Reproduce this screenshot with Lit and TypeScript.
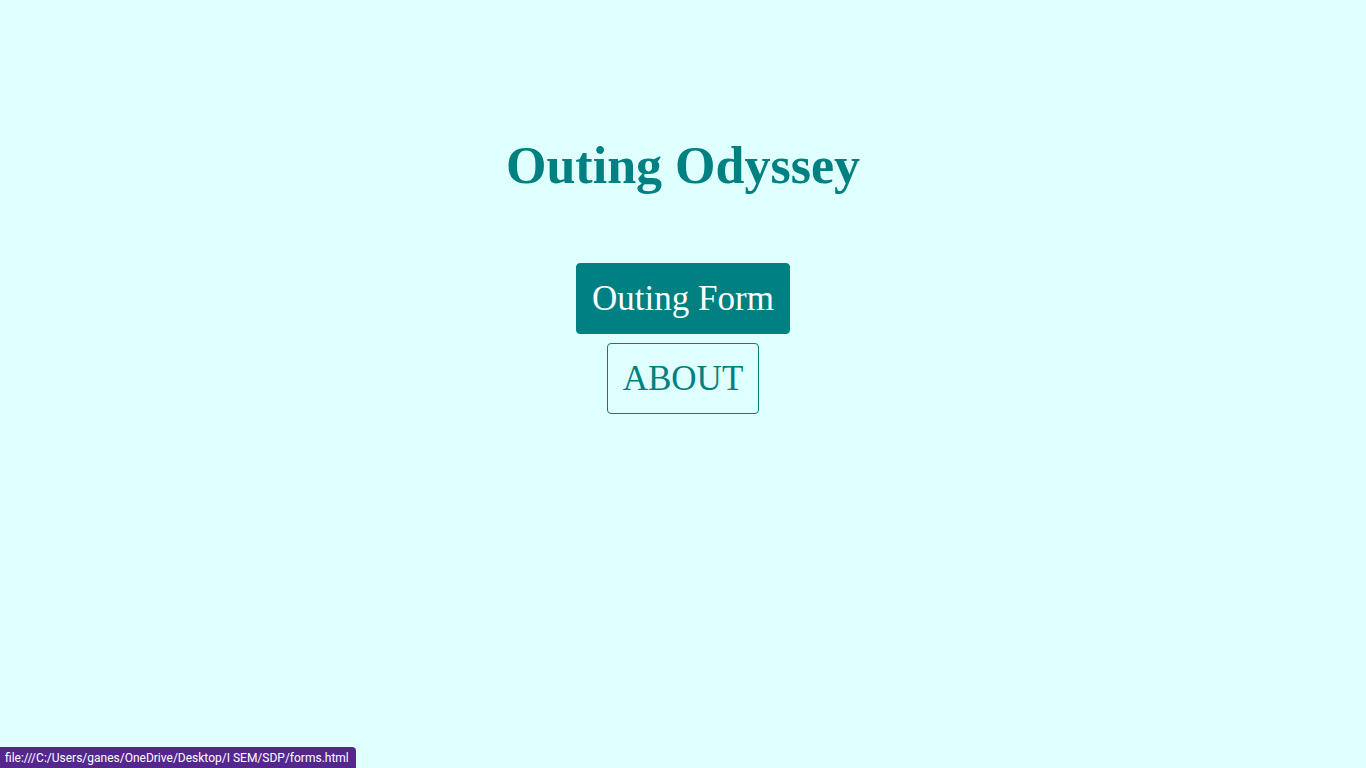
import { LitElement, html, css } from "lit";
import { customElement, state } from "lit/decorators.js";

@customElement("app-root")
export class AppRoot extends LitElement {
  static styles = css`
    :host {
      display: block;
      min-height: 100vh;
      background: #e0ffff;
      color: #008080;
      font-family: "Liberation Serif", "Times New Roman", serif;
    }
    main {
      display: flex;
      flex-direction: column;
      align-items: center;
      padding: 136px 16px 64px;
    }
    h1 {
      margin: 0 0 67px;
      font-size: 52px;
      line-height: 60px;
      font-weight: 700;
      text-align: center;
    }
    nav {
      display: flex;
      flex-direction: column;
      align-items: center;
      gap: 9px;
    }
    .button {
      padding: 15px 15px 14px;
      border: 1px solid #008080;
      border-radius: 4px;
      color: #008080;
      font-size: 35px;
      line-height: 40px;
      text-decoration: none;
    }
    .primary {
      background: #008080;
      color: #ffffff;
    }
    .status {
      position: fixed;
      left: 0;
      bottom: 0;
      padding: 3px 7px 2px 5px;
      border-top-right-radius: 4px;
      background: #54278f;
      color: #ffffff;
      font-family: "Segoe UI", Roboto, "Noto Sans", sans-serif;
      font-size: 12px;
      line-height: 16px;
      white-space: nowrap;
    }
  `;

  @state() private target = "file:///C:/Users/ganes/OneDrive/Desktop/I SEM/SDP/forms.html";

  render() {
    return html`
      <main>
        <h1>Outing Odyssey</h1>
        <nav>
          <a class="button primary" href="forms.html">Outing Form</a>
          <a class="button" href="about.html">ABOUT</a>
        </nav>
      </main>
      <div class="status" role="status">${this.target}</div>
    `;
  }
}
